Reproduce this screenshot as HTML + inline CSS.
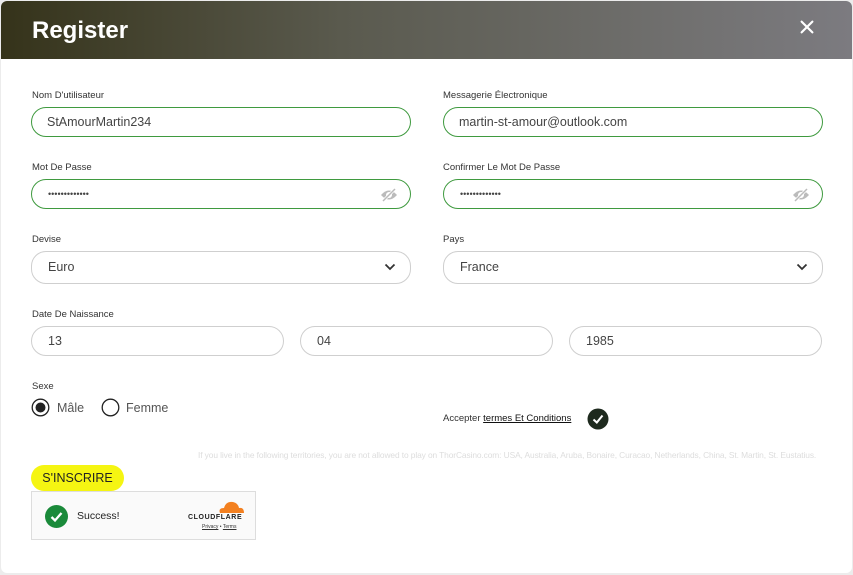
<!DOCTYPE html>
<html><head><meta charset="utf-8"><style>
*{box-sizing:border-box;margin:0;padding:0}
body{width:853px;height:575px;background:#ececec;font-family:"Liberation Sans",sans-serif;position:relative;overflow:hidden}
.card{position:absolute;left:1px;top:1px;width:851px;height:572px;background:#fff;border-radius:6px;overflow:hidden}
.hdr{height:58px;background:linear-gradient(90deg,#35331a 0%,#5a5a4e 40%,#7c7b80 100%);position:relative}
.hdr h1{position:absolute;left:31px;top:16px;color:#fff;font-size:24px;font-weight:bold}
.x{position:absolute;left:797px;top:17px;width:18px;height:18px}
.lbl{position:absolute;font-size:9.5px;color:#333}
.in{position:absolute;height:30px;border:1px solid #3f9a3f;border-radius:15px;font-size:12.5px;color:#444;padding-left:16px;line-height:28px}
.g{border-color:#cfcfcf}
.sel{height:33px;line-height:31px}
.eye{position:absolute;right:12px;top:8px}
.chev{position:absolute;right:14px;top:11px}
</style></head><body><div class="card">
<div class="hdr"><h1>Register</h1>
<svg class="x" viewBox="0 0 20 20"><path d="M4 4L16 16M16 4L4 16" stroke="#fff" stroke-width="2.4" stroke-linecap="round"/></svg></div>
<div class="lbl" style="left:31px;top:89px">Nom D'utilisateur</div>
<div class="lbl" style="left:442px;top:89px">Messagerie Électronique</div>
<div class="in" style="left:30px;top:106px;width:380px;padding-left:15px">StAmourMartin234</div>
<div class="in" style="left:442px;top:106px;width:380px;padding-left:15px">martin-st-amour@outlook.com</div>
<div class="lbl" style="left:31px;top:161px">Mot De Passe</div>
<div class="lbl" style="left:442px;top:161px">Confirmer Le Mot De Passe</div>
<div class="in" style="left:30px;top:178px;width:380px;font-size:9px;letter-spacing:0">•••••••••••••<svg class="eye" width="18" height="14" viewBox="0 0 18 14"><path d="M1 7Q9 -2 17 7Q9 16 1 7Z" fill="#bbb"/><circle cx="9" cy="7" r="3" fill="#fff"/><path d="M3 13L15 1" stroke="#fff" stroke-width="3"/><path d="M3 13L15 1" stroke="#bbb" stroke-width="1.5"/></svg></div>
<div class="in" style="left:442px;top:178px;width:380px;font-size:9px;letter-spacing:0">•••••••••••••<svg class="eye" width="18" height="14" viewBox="0 0 18 14"><path d="M1 7Q9 -2 17 7Q9 16 1 7Z" fill="#bbb"/><circle cx="9" cy="7" r="3" fill="#fff"/><path d="M3 13L15 1" stroke="#fff" stroke-width="3"/><path d="M3 13L15 1" stroke="#bbb" stroke-width="1.5"/></svg></div>
<div class="lbl" style="left:31px;top:233px">Devise</div>
<div class="lbl" style="left:442px;top:233px">Pays</div>
<div class="in g sel" style="left:30px;top:250px;width:380px">Euro<svg class="chev" width="12" height="8" viewBox="0 0 12 8"><path d="M1.5 1.5L6 6L10.5 1.5" stroke="#333" stroke-width="1.8" fill="none"/></svg></div>
<div class="in g sel" style="left:442px;top:250px;width:380px">France<svg class="chev" width="12" height="8" viewBox="0 0 12 8"><path d="M1.5 1.5L6 6L10.5 1.5" stroke="#333" stroke-width="1.8" fill="none"/></svg></div>
<div class="lbl" style="left:31px;top:308px">Date De Naissance</div>
<div class="in g" style="left:30px;top:325px;width:253px">13</div>
<div class="in g" style="left:299px;top:325px;width:253px">04</div>
<div class="in g" style="left:568px;top:325px;width:253px">1985</div>
<div class="lbl" style="left:31px;top:380px">Sexe</div>
<svg style="position:absolute;left:30px;top:397px" width="19" height="19"><circle cx="9.5" cy="9.5" r="8.3" fill="none" stroke="#222" stroke-width="1.3"/><circle cx="9.5" cy="9.5" r="5" fill="#222"/></svg>
<div style="position:absolute;left:56px;top:400px;font-size:12.5px;color:#555">Mâle</div>
<svg style="position:absolute;left:100px;top:397px" width="19" height="19"><circle cx="9.5" cy="9.5" r="8.3" fill="none" stroke="#222" stroke-width="1.3"/></svg>
<div style="position:absolute;left:125px;top:400px;font-size:12.5px;color:#555">Femme</div>
<div style="position:absolute;left:442px;top:412px;font-size:9.5px;color:#333">Accepter <span style="text-decoration:underline;color:#111">termes Et Conditions</span></div>
<svg style="position:absolute;left:586px;top:407px" width="22" height="22"><circle cx="11" cy="11" r="10.5" fill="#1e2a1e"/><path d="M6.5 11.5L9.8 14.5L15.5 7.5" stroke="#fff" stroke-width="2" fill="none"/></svg>
<div style="position:absolute;left:197px;top:449px;font-size:8.4px;color:#ddd;white-space:nowrap;letter-spacing:-0.1px">If you live in the following territories, you are not allowed to play on ThorCasino.com: USA, Australia, Aruba, Bonaire, Curacao, Netherlands, China, St. Martin, St. Eustatius.</div>
<div style="position:absolute;left:30px;top:464px;width:93px;height:26px;background:#f5f512;border-radius:13px;font-size:12.5px;color:#222;text-align:center;line-height:26px">S'INSCRIRE</div>
<div style="position:absolute;left:30px;top:490px;width:225px;height:49px;background:#fafafa;border:1px solid #ddd">
<svg style="position:absolute;left:13px;top:13px" width="23" height="23"><circle cx="11.5" cy="11.5" r="11.5" fill="#1a8a3a"/><path d="M6.5 12L10 15.5L16.5 8" stroke="#fff" stroke-width="2.3" fill="none"/></svg>
<div style="position:absolute;left:45px;top:18px;font-size:10.5px;color:#222">Success!</div>
<svg style="position:absolute;left:184px;top:7px" width="30" height="14" viewBox="0 0 30 14"><path d="M4 14Q2 9 8 9Q10 2 17 3Q22 4 23 9Q28 8 28 14Z" fill="#f38020"/></svg>
<div style="position:absolute;left:156px;top:22px;font-size:7px;font-weight:bold;letter-spacing:0.6px;color:#222">CLOUDFLARE</div>
<div style="position:absolute;left:170px;top:32px;font-size:5px;color:#333"><u>Privacy</u> • <u>Terms</u></div>
</div>
</div></body></html>
